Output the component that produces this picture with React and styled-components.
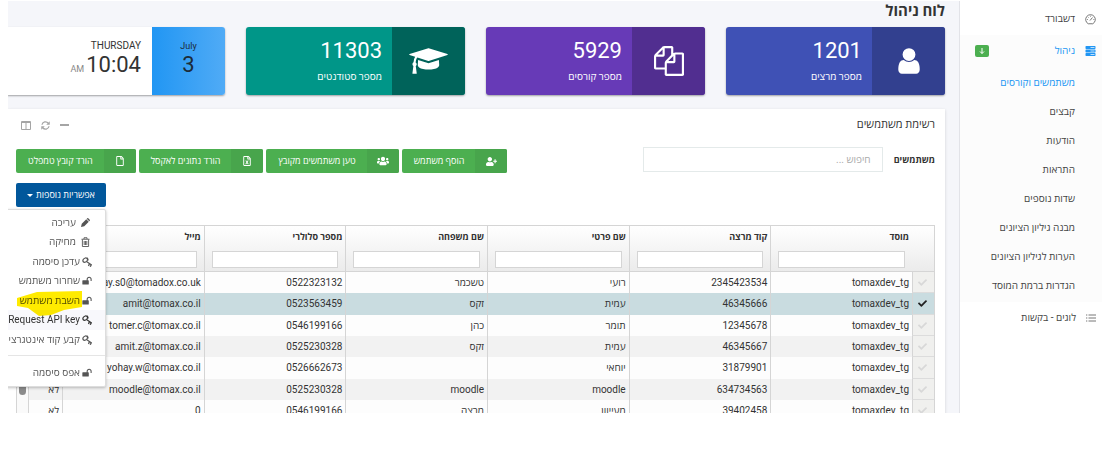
import React from "react"
import styled, { createGlobalStyle, css } from "styled-components"
import { FaCheck, FaUsers, FaUserPlus, FaRegFile, FaRegFileExcel } from "react-icons/fa"

const GlobalStyle = createGlobalStyle`
  *, *::before, *::after { box-sizing: border-box; }
  body {
    margin: 0;
    background: #fff;
    color: #333;
    font-family: Roboto, "Open Sans", "Noto Sans", sans-serif;
    font-size: 10px;
    line-height: 16px;
  }
  button, input { font: inherit; color: inherit; }
  a { color: inherit; text-decoration: none; }
  ul { list-style: none; margin: 0; padding: 0; }
  svg { display: block; flex: none; }
`

const Shell = styled.div`
  display: grid;
  grid-template-columns: 142px minmax(0, 1fr);
  height: 90vh;
  margin: 1px 4px 0 8px;
  overflow: hidden;
`

/* sidebar */

const Sidebar = styled.nav`
  background: #fff;
  padding-top: 2px;
`

const NavLink = styled.a`
  display: flex;
  align-items: center;
  gap: 10px;
  height: 32px;
  padding: 0 6px 0 28px;
  color: ${p => (p.$active ? "#2196f3" : "#444")};

  svg { color: ${p => (p.$active ? "#2196f3" : "#666")}; }
`

const NavGroup = styled.div`
  background: #fcfcfc;
  padding-bottom: 2px;
`

const SubList = styled.div`
  padding-top: 1px;
`

const SubLink = styled.a`
  display: flex;
  align-items: center;
  height: 29px;
  padding-right: 27px;
  color: ${p => (p.$active ? "#2196f3" : "#444")};
`

const Badge = styled.span`
  display: flex;
  align-items: center;
  justify-content: center;
  width: 14px;
  height: 12px;
  margin-right: auto;
  margin-left: -13px;
  border-radius: 2px;
  background: #4caf50;

  && svg { color: #fff; }
`

/* main area */

const Main = styled.main`
  background: #f5f6fa;
  border-right: 1px solid #e2e3e8;
  padding-right: 14px;
`

const PageTitle = styled.h1`
  margin: 0;
  height: 26px;
  font-size: 15px;
  line-height: 20px;
  font-weight: 700;
`

const Cards = styled.div`
  display: grid;
  grid-template-columns: repeat(4, 1fr);
  gap: 21px;
  margin-left: -2px;
`

const Card = styled.section`
  display: flex;
  height: 68px;
  border-radius: 3px;
  overflow: hidden;
  color: #fff;
  background: ${p => p.$color};
  box-shadow: 0 1px 2px rgba(0, 0, 0, 0.35);
`

const CardIcon = styled.div`
  display: flex;
  align-items: center;
  justify-content: center;
  width: 73px;
  background: ${p => p.$color};
`

const CardBody = styled.div`
  padding: 10px;
`

const CardValue = styled.div`
  font-size: 22px;
  line-height: 28px;
`

const CardLabel = styled.div`
  margin-top: 4px;
`

const DateBox = styled.div`
  width: 73px;
  padding-top: 11px;
  text-align: center;
  font-size: 9px;
  color: #1c2b38;
  background: linear-gradient(to right, #2196f3, #50abf6);
`

const ClockBox = styled.div`
  padding: 11px;
  color: #333;
`

const BigText = styled.div`
  display: flex;
  align-items: baseline;
  justify-content: ${p => (p.$center ? "center" : "flex-start")};
  gap: 2px;
  font-size: 22px;
  line-height: 22px;

  small { font-size: 9px; color: #888; }
`

const Panel = styled.section`
  margin-top: 14px;
  padding: 0 10px 0 8px;
  background: #fff;
  box-shadow: 0 1px 3px rgba(0, 0, 0, 0.15);
`

const PanelHead = styled.header`
  display: flex;
  align-items: center;
  justify-content: space-between;
  height: 32px;
`

const PanelTitle = styled.h2`
  margin: 0;
  font-size: 11px;
  font-weight: 400;
`

const PanelTools = styled.div`
  display: flex;
  gap: 10px;
  padding-left: 5px;
`

const ToolButton = styled.button`
  padding: 0;
  border: 0;
  background: none;
  color: #a5a5a5;
`

const Toolbar = styled.div`
  display: flex;
  align-items: flex-start;
  justify-content: space-between;
  padding-top: 6px;
`

const Search = styled.label`
  display: flex;
  align-items: center;
  gap: 11px;
  font-size: 9px;
  font-weight: 700;

  input {
    width: 240px;
    height: 25px;
    padding: 0 11px;
    border: 1px solid #e4eaea;
    font-size: 10px;
    font-weight: 400;
  }
  input::placeholder { color: #aaa; opacity: 1; }
`

const Buttons = styled.div`
  display: flex;
  gap: 3px;
  margin-top: 2px;
`

const IconButton = styled.button`
  display: flex;
  align-items: center;
  height: 24px;
  padding: 0 0 0 12px;
  border: 0;
  border-radius: 2px;
  font-size: 9px;
  color: #fff;
  background: #4caf50;
  overflow: hidden;
`

const ButtonIcon = styled.span`
  display: flex;
  align-items: center;
  justify-content: center;
  align-self: stretch;
  width: 32px;
  margin-left: 11px;
  background: #48a54c;
`

const MoreWrap = styled.div`
  position: relative;
  width: 90px;
  margin: 10px auto 18px 0;
`

const MoreButton = styled.button`
  display: flex;
  align-items: center;
  justify-content: center;
  gap: 3px;
  width: 100%;
  height: 24px;
  padding: 0;
  border: 0;
  border-radius: 2px;
  font-size: 9px;
  color: #fff;
  background: #01579b;
`

const Caret = styled.span`
  border: 3px solid transparent;
  border-top-color: currentColor;
  border-bottom: 0;
`

const Menu = styled.ul`
  position: absolute;
  top: 100%;
  right: 0;
  z-index: 2;
  width: 125px;
  margin-top: 2px;
  padding: 3px 0;
  background: #fff;
  border: 1px solid #ddd;
  border-radius: 2px;
  box-shadow: 0 1px 3px rgba(0, 0, 0, 0.25);
`

const MenuItem = styled.li`
  position: relative;

  ${p => p.$divided && css`
    margin-top: 6px;
    padding-top: 7px;
    border-top: 1px solid #e5e5e5;
  `}

  button {
    display: flex;
    align-items: center;
    gap: ${p => (p.$wide ? 5 : 2)}px;
    width: 100%;
    height: 19px;
    padding: 0 ${p => (p.$wide ? 15 : 13)}px 0 0;
    border: 0;
    white-space: nowrap;
    color: ${p => (p.$hover ? "#333" : "#555")};
    background: ${p => (p.$hover ? "#f8f8fc" : "none")};
  }

  &:nth-child(even) button { height: 20px; }
`

/* highlighter stroke, laid over the item it marks */
const Marker = styled.svg`
  position: absolute;
  top: 0;
  right: 22px;
  z-index: 1;
  mix-blend-mode: multiply;
  pointer-events: none;
`

/* grid */

const GridBox = styled.div`
  display: flex;
  border: 1px solid #d5d5d5;
  border-bottom: 0;
`

const Table = styled.table`
  flex: 1;
  min-width: 0;
  width: 100%;
  table-layout: fixed;
  border-collapse: separate;
  border-spacing: 0;
  text-align: right;
`

const HeadCell = styled.th`
  height: 46px;
  padding: 3px 3px 0 7px;
  vertical-align: top;
  font-size: 9px;
  border-left: ${p => (p.$plain ? 0 : 1)}px solid #d5d5d5;
  border-bottom: 1px solid #d5d5d5;
  background: linear-gradient(#fff, #ebebeb);

  input {
    display: block;
    width: calc(100% - 4px);
    height: 17px;
    margin: 6px 4px 0 0;
    padding: 0 4px;
    border: 1px solid #d5d5d5;
    background: #fff;
  }
`

const Row = styled.tr`
  height: 21px;
  background: ${p => (p.$selected ? "#c9dce0" : "#fdfdfd")};

  &:nth-child(3n + 2) { height: 22px; }
  &:nth-child(even) { ${p => !p.$selected && "background: #f2f2f2;"} }
`

const Cell = styled.td`
  padding: 0 3px 0 0;
  border-left: 1px solid #d5d5d5;
  white-space: nowrap;
  overflow: hidden;
`

const CheckCell = styled.td`
  padding: 0 7px 0 0;
  border-left: 1px solid #d5d5d5;
  border-bottom: 1px solid #dcdcdc;
  color: ${p => (p.$selected ? "#222" : "#d8d8d8")};
  background: ${p => (p.$selected ? "#c9dce0" : "#f0f0ee")};
`

const Track = styled.div`
  width: 11px;
  padding: 140px 2px 0;
  background: #fafafa;
`

const Thumb = styled.div`
  height: 29px;
  border-radius: 4px;
  background: #8b8b8b;
`

const Glyph = ({ d, w = 1792, size, ratio = 1 }) => (
  <svg width={size * ratio} height={size} viewBox={`0 0 ${w} 1792`} fill="currentColor" aria-hidden="true">
    <path d={d} />
  </svg>
)

const userPath =
  "M1536 1399q0 109-62.5 187t-150.5 78h-854q-88 0-150.5-78t-62.5-187q0-85 8.5-160.5t31.5-152 58.5-131 94-89 134.5-34.5q131 128 313 128t313-128q76 0 134.5 34.5t94 89 58.5 131 31.5 152 8.5 160.5zm-256-887q0 159-112.5 271.5t-271.5 112.5-271.5-112.5-112.5-271.5 112.5-271.5 271.5-112.5 271.5 112.5 112.5 271.5z"
const filesPath =
  "M1696 384q40 0 68 28t28 68v1216q0 40-28 68t-68 28h-960q-40 0-68-28t-28-68v-288h-544q-40 0-68-28t-28-68v-672q0-40 20-88t48-76l408-408q28-28 76-48t88-20h416q40 0 68 28t28 68v328q68-40 128-40h416zm-544 213l-299 299h299v-299zm-640-384l-299 299h299v-299zm196 647l316-316v-416h-384v416q0 40-28 68t-68 28h-416v640h512v-256q0-40 20-88t48-76zm956 804v-1152h-384v416q0 40-28 68t-68 28h-416v640h896z"
const capPath =
  "M1774 836l18 316q4 69-82 128t-235 93.5-323 34.5-323-34.5-235-93.5-82-128l18-316 574 181q22 7 48 7t48-7zm530-324q0 23-22 31l-1120 352q-4 1-10 1t-10-1l-652-206q-43 34-71 111.5t-34 178.5q63 36 63 109 0 69-58 107l58 433q2 14-8 25-9 11-24 11h-192q-15 0-24-11-10-11-8-25l58-433q-58-38-58-107 0-73 65-111 11-207 98-330l-333-104q-22-8-22-31t22-31l1120-352q4-1 10-1t10 1l1120 352q22 8 22 31z"
const unlockPath =
  "M1728 576v256q0 26-19 45t-45 19h-64q-26 0-45-19t-19-45v-256q0-106-75-181t-181-75-181 75-75 181v192h96q40 0 68 28t28 68v576q0 40-28 68t-68 28h-960q-40 0-68-28t-28-68v-576q0-40 28-68t68-28h672v-192q0-185 131.5-316.5t316.5-131.5 316.5 131.5 131.5 316.5z"

const UnlockIcon = () => <Glyph d={unlockPath} size={10} />

const PencilIcon = () => (
  <svg width="9" height="9" viewBox="0 0 18 18" fill="currentColor" aria-hidden="true">
    <path d="M0 18l1.500-6.500L10.500 2.500l5 5L6.500 16.500zM11.500 1.500l1-1q1-.8 2 0l3 3q.8 1 0 2l-1 1z" />
  </svg>
)

const KeyIcon = () => (
  <svg width="10" height="10" viewBox="0 0 20 20" fill="none" stroke="currentColor" aria-hidden="true">
    <path d="M2.500 9.500C.5 7 3 2.800 6.500 2c3-.6 5 1.500 4.300 4.300-.8 3.200-5.800 6-8.300 3.200z" strokeWidth="2.400" />
    <path d="M10.500 1.500l1.800 5.500" strokeWidth="2.600" />
    <path d="M9 9l9.500 6.500" strokeWidth="2.200" />
    <path d="M13 18l2-5M16.500 19.500l2.500-5" strokeWidth="2.600" />
  </svg>
)

const BinIcon = () => (
  <svg width="9" height="10" viewBox="0 0 18 20" fill="none" stroke="currentColor" strokeWidth="1.8" aria-hidden="true">
    <path d="M1 4.5h16M6 4V1.5h6V4M2.8 5v14h12.4V5M6.4 8v8M9 8v8M11.6 8v8" />
  </svg>
)

const GaugeIcon = () => (
  <svg width="11" height="11" viewBox="0 0 22 22" fill="none" stroke="currentColor" strokeWidth="1.8" aria-hidden="true">
    <path d="M6.500 19.500a9.600 9.600 0 1 1 9 0zM10 13l5-6" />
    <path d="M4 11h2M16.500 11h2M11 3.500v2M6 6l1.300 1.300" strokeWidth="1.400" />
  </svg>
)

const ServerIcon = () => (
  <svg width="11" height="10" viewBox="0 0 22 20" fill="currentColor" aria-hidden="true">
    <path d="M2 0h18l1 1v4l-1 1H2L1 5V1zM2 7h18l1 1v4l-1 1H2l-1-1V8zM2 14h18l1 1v4l-1 1H2l-1-1v-4z" />
    <path d="M11 3h8M11 10h8M11 17h8" stroke="#fff" strokeWidth="1.400" />
  </svg>
)

const ListIcon = () => (
  <svg width="10" height="8" viewBox="0 0 20 16" stroke="currentColor" strokeWidth="1.8" aria-hidden="true">
    <path d="M0 2h2.6M5 2h15M0 8h2.6M5 8h15M0 14h2.6M5 14h15" />
  </svg>
)

const DownIcon = () => (
  <svg width="6" height="7" viewBox="0 0 12 14" fill="none" stroke="currentColor" strokeWidth="2" aria-hidden="true">
    <path d="M6 0v11M2 7l4 4 4-4" />
  </svg>
)

const ColumnsIcon = () => (
  <svg width="10" height="9" viewBox="0 0 10 9" fill="none" stroke="currentColor" aria-hidden="true">
    <path d="M.5.5h9v8h-9zM5 .5v8M.5 1.500h9" />
  </svg>
)

const RefreshIcon = () => (
  <svg width="9" height="9" viewBox="0 0 18 18" fill="none" stroke="currentColor" strokeWidth="2.6" aria-hidden="true">
    <path d="M2 7.500a7 7 0 0 1 12.5-3M16 10.500a7 7 0 0 1-12.5 3" />
    <path d="M17.500 .5v7h-7zM.5 17.500v-7h7z" fill="currentColor" stroke="none" />
  </svg>
)

const MinusIcon = () => (
  <svg width="9" height="9" viewBox="0 0 9 9" aria-hidden="true">
    <path d="M0 4h9" stroke="currentColor" strokeWidth="2" />
  </svg>
)

const subLinks = [
  "משתמשים וקורסים",
  "קבצים",
  "הודעות",
  "התראות",
  "שדות נוספים",
  "מבנה גיליון הציונים",
  "הערות לגיליון הציונים",
  "הגדרות ברמת המוסד",
]

const stats = [
  { value: "1201", label: "מספר מרצים", color: "#3f51b5", dark: "#32408f", icon: <Glyph d={userPath} size={30} /> },
  { value: "5929", label: "מספר קורסים", color: "#673ab7", dark: "#512e90", icon: <Glyph d={filesPath} size={30} /> },
  { value: "11303", label: "מספר סטודנטים", color: "#009688", dark: "#00635a", icon: <Glyph d={capPath} w={2304} size={30} ratio={1.3} /> },
]

const actions = [
  { label: "הוסף משתמש", icon: <FaUserPlus size={11} /> },
  { label: "טען משתמשים מקובץ", icon: <FaUsers size={12} /> },
  { label: "הורד נתונים לאקסל", icon: <FaRegFileExcel size={10} /> },
  { label: "הורד קובץ טמפלט", icon: <FaRegFile size={10} /> },
]

const menu = [
  { label: "עריכה", icon: <PencilIcon />, wide: true },
  { label: "מחיקה", icon: <BinIcon />, wide: true },
  { label: "עדכן סיסמה", icon: <KeyIcon /> },
  { label: "שחרור משתמש", icon: <UnlockIcon /> },
  { label: "השבת משתמש", icon: <UnlockIcon />, marked: true },
  { label: "Request API key", icon: <KeyIcon />, hover: true },
  { label: "קבע קוד אינטגרציה", icon: <KeyIcon /> },
  { label: "אפס סיסמה", icon: <UnlockIcon />, divided: true },
]

const columns = ["מוסד", "קוד מרצה", "שם פרטי", "שם משפחה", "מספר סלולרי", "מייל"]

const rows = [
  ["tomaxdev_tg", "2345423534", "רועי", "טשכמר", "0522323132", "yohay.s0@tomadox.co.uk", ""],
  ["tomaxdev_tg", "46345666", "עמית", "זקס", "0523563459", "amit@tomax.co.il", ""],
  ["tomaxdev_tg", "12345678", "תומר", "כהן", "0546199166", "tomer.c@tomax.co.il", ""],
  ["tomaxdev_tg", "46345667", "עמית", "זקס", "0525230328", "amit.z@tomax.co.il", ""],
  ["tomaxdev_tg", "31879901", "יוחאי", "", "0526662673", "yohay.w@tomax.co.il", ""],
  ["tomaxdev_tg", "634734563", "moodle", "moodle", "0525230328", "moodle@tomax.co.il", "לא"],
  ["tomaxdev_tg", "39402458", "מעייוון", "מרצה", "0546199166", "0", "לא"],
]

const SideNav = () => (
  <Sidebar>
    <NavLink href="#dashboard"><GaugeIcon />דשבורד</NavLink>
    <NavGroup>
      <NavLink href="#manage" $active>
        <ServerIcon />ניהול
        <Badge><DownIcon /></Badge>
      </NavLink>
      <SubList>
        {subLinks.map((text, i) => (
          <SubLink key={text} href="#manage" $active={i === 0}>{text}</SubLink>
        ))}
      </SubList>
    </NavGroup>
    <NavLink href="#logs"><ListIcon />לוגים - בקשות</NavLink>
  </Sidebar>
)

const StatCards = () => (
  <Cards>
    {stats.map(s => (
      <Card key={s.label} $color={s.color}>
        <CardIcon $color={s.dark}>{s.icon}</CardIcon>
        <CardBody>
          <CardValue>{s.value}</CardValue>
          <CardLabel>{s.label}</CardLabel>
        </CardBody>
      </Card>
    ))}
    <Card $color="#fff">
      <DateBox>
        <div>July</div>
        <BigText $center>3</BigText>
      </DateBox>
      <ClockBox>
        <div>THURSDAY</div>
        <BigText>10:04<small>AM</small></BigText>
      </ClockBox>
    </Card>
  </Cards>
)

const MoreMenu = () => (
  <MoreWrap>
    <MoreButton type="button">אפשריות נוספות<Caret /></MoreButton>
    <Menu>
      {menu.map(m => (
        <MenuItem key={m.label} $wide={m.wide} $hover={m.hover} $divided={m.divided}>
          {m.marked && (
            <Marker width="67" height="26" viewBox="0 0 67 26" aria-hidden="true">
              <path d="M1 7l20-6 45-1v16l-18 3-13 5-12 1-11-8-11-2z" fill="#ffeb00" />
            </Marker>
          )}
          <button type="button">{m.icon}{m.label}</button>
        </MenuItem>
      ))}
    </Menu>
  </MoreWrap>
)

const UserGrid = () => (
  <GridBox>
    <Table>
      <colgroup>
        <col style={{ width: 22 }} />
        {columns.map(c => <col key={c} />)}
        <col style={{ width: 34 }} />
      </colgroup>
      <thead>
        <tr>
          <HeadCell $plain />
          {columns.map(c => (
            <HeadCell key={c}>
              {c}
              <input type="text" aria-label={c} />
            </HeadCell>
          ))}
          <HeadCell />
        </tr>
      </thead>
      <tbody>
        {rows.map((row, i) => (
          <Row key={row[1]} $selected={i === 1}>
            <CheckCell $selected={i === 1}><FaCheck size={9} /></CheckCell>
            {row.map((text, j) => <Cell key={j}>{text}</Cell>)}
          </Row>
        ))}
      </tbody>
    </Table>
    <Track><Thumb /></Track>
  </GridBox>
)

const App = () => (
  <>
    <GlobalStyle />
    <Shell dir="rtl">
      <SideNav />
      <Main>
        <PageTitle>לוח ניהול</PageTitle>
        <StatCards />
        <Panel>
          <PanelHead>
            <PanelTitle>רשימת משתמשים</PanelTitle>
            <PanelTools>
              <ToolButton aria-label="מזער"><MinusIcon /></ToolButton>
              <ToolButton aria-label="רענן"><RefreshIcon /></ToolButton>
              <ToolButton aria-label="עמודות"><ColumnsIcon /></ToolButton>
            </PanelTools>
          </PanelHead>
          <Toolbar>
            <Search>
              משתמשים
              <input type="text" placeholder="חיפוש ..." />
            </Search>
            <Buttons>
              {actions.map(a => (
                <IconButton key={a.label} type="button">
                  <ButtonIcon>{a.icon}</ButtonIcon>
                  {a.label}
                </IconButton>
              ))}
            </Buttons>
          </Toolbar>
          <MoreMenu />
          <UserGrid />
        </Panel>
      </Main>
    </Shell>
  </>
)

export default App
